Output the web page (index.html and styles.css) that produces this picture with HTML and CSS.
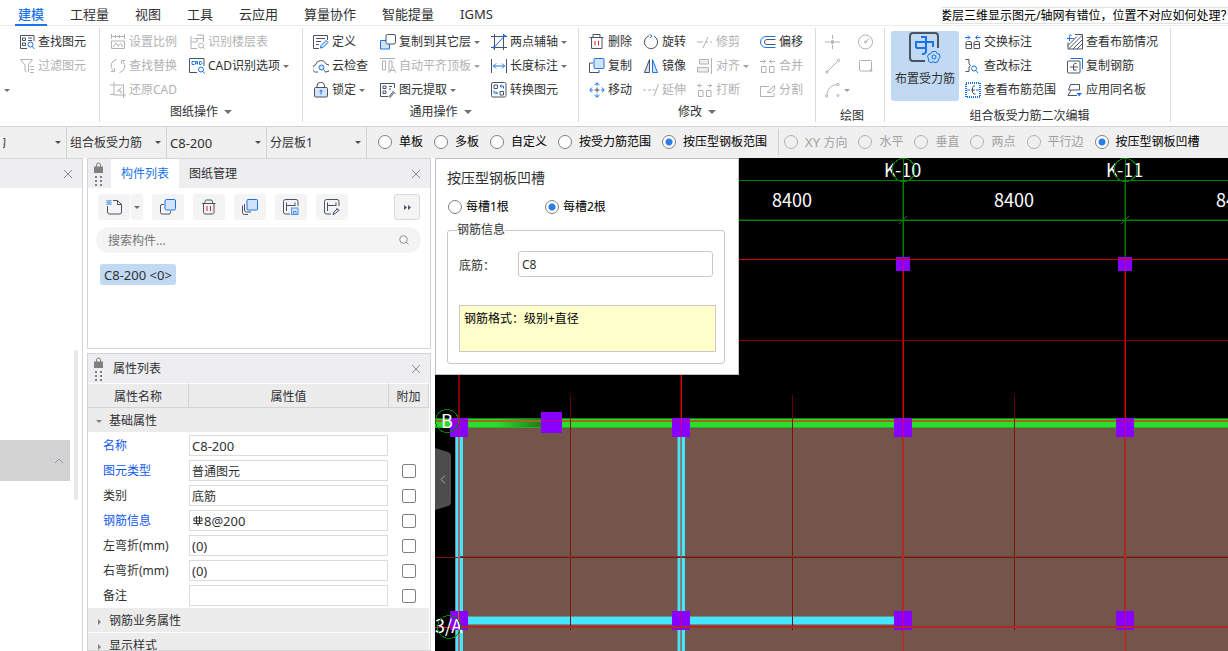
FILE: index.html
```html
<!DOCTYPE html>
<html lang="zh-CN">
<head>
<meta charset="utf-8">
<title>建模</title>
<link rel="stylesheet" href="styles.css">
</head>
<body>
<header class="menubar">
  <nav class="tabs">
    <a class="tab active" href="#">建模</a><a class="tab" href="#">工程量</a><a class="tab" href="#">视图</a><a class="tab" href="#">工具</a><a class="tab" href="#">云应用</a><a class="tab" href="#">算量协作</a><a class="tab" href="#">智能提量</a><a class="tab" href="#">IGMS</a>
  </nav>
  <div class="ticker"><span>娄层三维显示图元/轴网有错位，位置不对应如何处理？</span></div>
</header>

<section class="ribbon">
  <div class="group g-select">
    <div class="tools">
      <button class="tool"><svg class="ic" viewBox="0 0 16 16"><path class="d" d="M15 7V1.500H1.500v13H8M3.500 4h3v2.500h-3zM3.500 9h3v2.500h-3zM9 4h4M9 6.500h4"/><path class="b" d="M14 10.500a2.500 2.500 0 1 1-5 0 2.500 2.500 0 0 1 5 0zM13.300 12.500l2 2.500"/></svg>查找图元</button>
      <button class="tool off"><svg class="ic" viewBox="0 0 16 16"><path d="M1.500 1.500h12L9.500 6.500v7.500M1.500 1.500l4.500 5.500v6l1.500 1M11 8.500h4M11 11.500h4M11 14.500h4"/></svg>过滤图元</button>
      <button class="tool stub" aria-label="更多"><svg class="ic" viewBox="0 0 16 16"><path class="b" d="M11 5h1M11 8.500h1M11 12h1"/></svg><i class="arr"></i></button>
    </div>
  </div>

  <div class="group g-drawing">
    <div class="tools">
      <button class="tool off"><svg class="ic" viewBox="0 0 16 16"><path d="M1.500 0v5M14.500 0v5M1.500 2.500h13M5.500 1v3M9.500 1v3M1.500 7v7.500h13V7zM3 13l3-4 2.500 3.500M8 12l2.500-2.500L13 13"/></svg>设置比例</button>
      <button class="tool off"><svg class="ic" viewBox="0 0 16 16"><path d="M2 2v6H8V4.500h6.500V8M2 14.500h6M2 8v6.500M8 1h6.500v4M5 4.500h3M14 13l2 2.500"/><circle cx="12" cy="11.500" r="2.500"/></svg>识别楼层表</button>
      <button class="tool off"><svg class="ic" viewBox="0 0 16 16"><path d="M6.500 1.500A6.500 6.500 0 0 0 3 12.500M1 13.500h3.500V10M9.500 14.500A6.500 6.500 0 0 0 13 3.500M15 2.500h-3.500V6"/></svg>查找替换</button>
      <button class="tool"><svg class="ic" viewBox="0 0 16 16"><path class="d" d="M15 8V.500H.500v14H8"/><path class="b" d="M5.500 3.500H3v3h2.500M6.500 6.500V3.500h2v3M6.500 5h2M10.500 3.500h1.500l1 1v1l-1 1h-1.500z"/><circle class="b" cx="12" cy="11.500" r="2.500"/><path class="b" d="M14 13.500l1.500 2"/></svg>CAD识别选项<i class="arr"></i></button>
      <button class="tool off"><svg class="ic" viewBox="0 0 16 16"><path d="M4 0v13h12M0 3h14M13.500 3v13M0 12.500h4M11 6L8 9h3v2.500M11.500 5.500L7 9.500"/></svg>还原CAD</button>
    </div>
    <button class="group-title">图纸操作<i class="arr big"></i></button>
  </div>

  <div class="group g-common">
    <div class="tools">
      <button class="tool"><svg class="ic" viewBox="0 0 16 16"><path class="d" d="M14.500 6V1.500H.500v13H6M3 4.500h9M3 7.500h5M3 10.500h3"/><path class="bf" d="M8 11.500l5-5 2 2-5 5-2.500.500z"/></svg>定义</button>
      <button class="tool"><svg class="ic" viewBox="0 0 16 16"><path class="bf" d="M.500 6.500h9v8.500h-9z"/><rect class="dw" x="6" y=".5" width="9.500" height="9.500" rx="1.500"/></svg>复制到其它层<i class="arr"></i></button>
      <button class="tool"><svg class="ic" viewBox="0 0 16 16"><path class="d" d="M3.500 0v16M12.500 0v16M0 2.500h16M0 13.500h16"/><path class="b" d="M2.500 14L14 1.500"/><circle class="bs" cx="3" cy="13.500" r="1.300"/><circle class="bs" cx="13.500" cy="2" r="1.300"/></svg>两点辅轴<i class="arr"></i></button>
      <button class="tool"><svg class="ic" viewBox="0 0 16 16"><path class="d" d="M5 14H4A3.500 3.500 0 0 1 2.500 7 5.500 5.500 0 0 1 13 6a4 4 0 0 1 0 8h-1"/><circle class="bf" cx="8.500" cy="9.500" r="2.500"/><path class="b" d="M10.500 11.500l2 2.500"/></svg>云检查</button>
      <button class="tool off"><svg class="ic" viewBox="0 0 16 16"><path d="M0 .500h15M2.500 3v9h3V3zM9 14V3h3v5M9 15l3.500-7L16 15M10.500 12.500h4"/></svg>自动平齐顶板<i class="arr"></i></button>
      <button class="tool"><svg class="ic" viewBox="0 0 16 16"><path class="d" d="M.500 1v14M15.500 1v14"/><path class="b" d="M2 8h12M5 5.500L2.500 8 5 10.500M11 5.500L13.500 8 11 10.500"/></svg>长度标注<i class="arr"></i></button>
      <button class="tool"><svg class="ic" viewBox="0 0 16 16"><path class="d" d="M4 5.500V4a3.500 3.500 0 0 1 7.500 0v1.500"/><rect class="dl" x="1.500" y="5.500" width="13" height="9.500" rx="1"/><path class="b" d="M8 12.500V9M6.500 9.500L8 8l1.500 1.500"/></svg>锁定<i class="arr"></i></button>
      <button class="tool"><svg class="ic" viewBox="0 0 16 16"><path class="d" d="M14.500 6V1.500H.500v13H8M3 4h3v2.500H3zM3 9h3v2.500H3zM9 4.500h3M9 7h2"/><path class="dl" d="M9 14.500l3.500-4 1 1-3.500 4zM12.500 9l3 3"/></svg>图元提取<i class="arr"></i></button>
      <button class="tool"><svg class="ic" viewBox="0 0 16 16"><rect class="d" x=".5" y=".5" width="14.500" height="14.500" rx="1.500"/><path class="d" d="M3 3h3.500v3.500H3zM9 9.500h3.500V13H9z"/><path class="b" d="M12.500 6.500V4H9M10.500 2.500L9 4l1.500 1.500M3 8.500V11h3.500M5 9.500L6.500 11 5 12.500"/></svg>转换图元</button>
    </div>
    <button class="group-title">通用操作<i class="arr big"></i></button>
  </div>

  <div class="group g-modify">
    <div class="tools">
      <button class="tool"><svg class="ic" viewBox="0 0 16 16"><path class="d" d="M.500 3.500h14M4 3.500v-3h7v3M2.500 3.500v11h10.500v-11"/><path class="r" d="M6 7v4.500M9.500 7v4.500"/></svg>删除</button>
      <button class="tool"><svg class="ic" viewBox="0 0 16 16"><path class="d" d="M6 1.800A6.600 6.600 0 1 0 11 2.200"/><path class="b" d="M6.500.500L9 2 7 4"/></svg>旋转</button>
      <button class="tool off"><svg class="ic" viewBox="0 0 16 16"><path d="M0 8h6M11 3L6 14M9 8h2M13 8h2"/></svg>修剪</button>
      <button class="tool"><svg class="ic" viewBox="0 0 16 16"><path class="b" d="M15.500 2.500H6a5.500 5.500 0 0 0 0 11h9.500"/><path class="d" d="M15.500 5.500H7a2.500 2.500 0 0 0 0 5h8.500"/></svg>偏移</button>
      <button class="tool"><svg class="ic" viewBox="0 0 16 16"><path class="d" d="M4 5H.500v9.500H10V12"/><rect class="bf" x="5" y=".5" width="10" height="10" rx="1"/></svg>复制</button>
      <button class="tool"><svg class="ic" viewBox="0 0 16 16"><path class="dl" d="M6.500 1.500v13h-5z"/><path class="bf" d="M9.500 1.500v13h5z"/></svg>镜像</button>
      <button class="tool off"><svg class="ic" viewBox="0 0 16 16"><path class="gf" d="M2.500 1.500h9v4.500h-9zM.500 9.500h11V14H.500zM14.500 0v16"/></svg>对齐<i class="arr"></i></button>
      <button class="tool off"><svg class="ic" viewBox="0 0 16 16"><path d="M1.500 8.500h4.500v6H1.500zM9.500 8.500H14v6H9.500zM0 3.500h5M3.500 1.500l2 2-2 2M15 3.500h-5M11.500 1.500l-2 2 2 2"/></svg>合并</button>
      <button class="tool"><svg class="ic" viewBox="0 0 16 16"><path class="b" d="M5.500 3L8 .800 10.500 3M5.500 13L8 15.200 10.500 13M3 5.500L.800 8 3 10.500M13 5.500L15.200 8 13 10.500M1 8h3M12 8h3M8 1v3M8 12v3"/><path class="d" d="M5.500 8h5M8 5.500v5"/></svg>移动</button>
      <button class="tool off"><svg class="ic" viewBox="0 0 16 16"><path d="M0 8h3M5 8h3M9.500 8h3M15.500 2L11 14"/></svg>延伸</button>
      <button class="tool off"><svg class="ic" viewBox="0 0 16 16"><path d="M1.500 8.500h4.500v6H1.500zM9.500 8.500H14v6H9.500zM.500 3.500H5M3 1.500l-2 2 2 2M15 3.500h-4.500M12.500 1.500l2 2-2 2"/></svg>打断</button>
      <button class="tool off"><svg class="ic" viewBox="0 0 16 16"><path d="M9 4.500H.500v10H14V11M7 10.500l7.500-7v4L11 10.500z"/></svg>分割</button>
    </div>
    <button class="group-title">修改<i class="arr big"></i></button>
  </div>

  <div class="group g-draw">
    <div class="tools">
      <button class="tool off" aria-label="点"><svg class="ic" viewBox="0 0 16 16"><path d="M0 8h5M10 8h5M7.500 1v4M7.500 11v4"/><circle cx="7.500" cy="8" r="1.500" fill="currentColor"/></svg></button>
      <button class="tool off" aria-label="圆"><svg class="ic" viewBox="0 0 16 16"><circle cx="7.500" cy="8" r="7"/><path d="M7.500 8l4-3.500"/><circle cx="7.500" cy="8" r="1"/></svg></button>
      <button class="tool off" aria-label="直线"><svg class="ic" viewBox="0 0 16 16"><path d="M2.500 13.500l10-10"/><circle cx="2" cy="14" r="1.200"/><circle cx="13.500" cy="2.500" r="1.200"/></svg></button>
      <button class="tool off" aria-label="矩形"><svg class="ic" viewBox="0 0 16 16"><rect x="1.500" y="2.500" width="12" height="10.500" rx="1"/><circle cx="13" cy="12.500" r="1"/></svg></button>
      <button class="tool off" aria-label="圆弧"><svg class="ic" viewBox="0 0 16 16"><path d="M2 13C2 7 6 3 12 2.500"/><circle cx="1.500" cy="14" r="1.200"/><circle cx="13" cy="2.500" r="1.200"/><circle cx="13" cy="13.500" r="1"/></svg><i class="arr"></i></button>
    </div>
    <div class="group-title low">绘图</div>
  </div>

  <div class="group g-rebar">
    <div class="rebar-row">
      <button class="big-tool"><svg viewBox="0 0 32 32"><path class="d2" d="M29 16V4q0-3-3-3H4Q1 1 1 4v22q0 3 3 3h12"/><path class="b2" d="M12 5h5v14q0 3-4 3M7 16v-6h17v5M7 16h10"/><circle class="b1" cx="25" cy="25" r="2"/><path class="b1" d="M23 19.500h4l1 2.200 2.500.500.500 3-1.500 2-.500 2.500-3 1-2-1-2 1-2.500-1.500v-2.500l-1-2 1-2.500 2.500-.500z"/></svg>布置受力筋</button>
      <div class="tools">
        <button class="tool"><svg class="ic" viewBox="0 0 16 16"><path class="d" d="M1 10.500h5.500M9 10.500h5.500M1 14.500V9q0-1.500 1.500-1.500H5q1.500 0 1.500 1.500v5.500zM9 14.500V9q0-1.500 1.500-1.500H13q1.500 0 1.500 1.500v5.500z"/><path class="b" d="M0 3.500h4.500M3 1.500l2 2-2 2M15.500 3.500H11M12.500 1.500l-2 2 2 2"/></svg>交换标注</button>
        <button class="tool"><svg class="ic" viewBox="0 0 16 16"><path class="b" d="M0 4.500h7M4.500 1.500q-2-2-2 1v4.500"/><path class="d" d="M8 .500h7.500v14.500H1V8.500M2 14.500L15 1.500M6 15l9-9M10 15l5-5M1 11.500l9-9"/></svg>查看布筋情况</button>
        <button class="tool"><svg class="ic" viewBox="0 0 16 16"><path class="d" d="M.500 1.500H4V6l1.500 1.500L4 9v4.500H.500"/><circle class="b" cx="9" cy="10.500" r="2.500"/><path class="b" d="M11 12.500l2 2.500"/></svg>查改标注</button>
        <button class="tool"><svg class="ic" viewBox="0 0 16 16"><path class="b" d="M3.500.500h12V11"/><rect class="d" x=".5" y="3" width="12.500" height="12" rx="1"/><path class="d" d="M3 9h8M9.500 5.500H7.500L6.500 7v5h3"/></svg>复制钢筋</button>
        <button class="tool"><svg class="ic" viewBox="0 0 16 16"><rect class="dash" x="1" y="1" width="14" height="14"/><path class="b" d="M2 8h3M11 8h3"/><path class="d" d="M10 4H8.500L7.500 5.500v5L9 12h1.500M6 8h4"/></svg>查看布筋范围</button>
        <button class="tool"><svg class="ic" viewBox="0 0 16 16"><path class="d" d="M3.500 2.500h9V8h-11zM4 8L1 13.500h9"/><path class="bs" d="M9.500 11h5.500l-2.800 3.500z"/></svg>应用同名板</button>
      </div>
    </div>
    <div class="group-title low">组合板受力筋二次编辑</div>
  </div>
</section>

<form class="options">
  <div class="combo first"><select aria-label="专业"><option>构</option></select></div>
  <div class="combo"><select aria-label="构件类型"><option>组合板受力筋</option></select></div>
  <div class="combo"><select class="latin" aria-label="构件"><option>C8-200</option></select></div>
  <div class="combo"><select aria-label="分层板"><option>分层板1</option></select></div>
  <div class="radios">
    <label><input type="radio" name="range">单板</label>
    <label><input type="radio" name="range">多板</label>
    <label><input type="radio" name="range">自定义</label>
    <label><input type="radio" name="range">按受力筋范围</label>
    <label><input type="radio" name="range" checked>按压型钢板范围</label>
  </div>
  <div class="radios second">
    <label class="off"><input type="radio" name="dir"><span><span class="latin">XY </span>方向</span></label>
    <label class="off"><input type="radio" name="dir">水平</label>
    <label class="off"><input type="radio" name="dir">垂直</label>
    <label class="off"><input type="radio" name="dir">两点</label>
    <label class="off"><input type="radio" name="dir">平行边</label>
    <label><input type="radio" name="dir" checked>按压型钢板凹槽</label>
  </div>
</form>

<main class="work">
  <aside class="nav-panel">
    <div class="panel-head"><button class="close" aria-label="关闭"><svg viewBox="0 0 10 10"><path d="M1 1l8 8M9 1l-8 8"/></svg></button></div>
    <div class="nav-body">
      <div class="nav-list"><button class="nav-group" aria-label="收起"><svg viewBox="0 0 10 6"><path d="M1 5l4-4 4 4"/></svg></button></div>
      <div class="scroll-thumb"></div>
    </div>
  </aside>

  <div class="docks">
    <section class="dock list-dock">
      <div class="panel-head">
        <svg class="grip" viewBox="0 0 9 24"><path class="lk" d="M2.500 5V3a2 2 0 0 1 4 0v2"/><path class="gs" d="M0 4.500h9V11H0zM1 14h2v2H1zM6 14h2v2H6zM1 18h2v2H1zM6 18h2v2H6zM1 22h2v2H1zM6 22h2v2H6z"/></svg>
        <a class="ptab active" href="#">构件列表</a><a class="ptab" href="#">图纸管理</a>
        <button class="close" aria-label="关闭"><svg viewBox="0 0 10 10"><path d="M1 1l8 8M9 1l-8 8"/></svg></button>
      </div>
      <div class="list-tools">
        <div class="split">
          <button class="lt" aria-label="新建"><svg class="ic" viewBox="0 0 16 16"><path class="d" d="M1.500 7v6q0 2 2 2h10q2 0 2-2V5.500l-4-4H7M11.500 1.500v4h4"/><path class="bs" d="M.500 1h1v1h-1zM2.500 1h1v1h-1zM4.500 1h1v1h-1zM1.500 2h1v1h-1zM3.500 2h1v1h-1zM.500 3h1v1h-1zM2.500 3h1v1h-1zM4.500 3h1v1h-1zM1.500 4h1v1h-1zM3.500 4h1v1h-1zM.500 5h1v1h-1zM2.500 5h1v1h-1zM4.500 5h1v1h-1z"/></svg></button>
          <button class="lt drop" aria-label="新建选项"><i class="arr"></i></button>
        </div>
        <button class="lt" aria-label="复制"><svg class="ic" viewBox="0 0 16 16"><path class="d" d="M4 5.500H2Q.500 5.500.500 7v6.500Q.500 15 2 15h7q1.500 0 1.500-1.500V12"/><rect class="bf" x="5" y=".5" width="10.500" height="10.500" rx="1.500"/></svg></button>
        <button class="lt" aria-label="删除"><svg class="ic" viewBox="0 0 16 16"><path class="d" d="M1 4.500h13.500M4 4V2.500Q4 1 5.500 1H10q1.500 0 1.500 1.500V4M2.500 4.500v9Q2.500 15 4 15h7.500q1.500 0 1.500-1.500v-9"/><path class="r" d="M6 7v5M9.500 7v5"/></svg></button>
        <button class="lt" aria-label="层间复制"><svg class="ic" viewBox="0 0 16 16"><path class="d" d="M.500 6.500v7q0 2 2 2H6M2.500 5v6q0 2 2 2H9"/><rect class="bf" x="5" y=".5" width="10.500" height="10.500" rx="1"/></svg></button>
        <button class="lt" aria-label="存档"><svg class="ic" viewBox="0 0 16 16"><path class="d" d="M15 7V2.500Q15 .500 13 .500H2.500Q.500.500.500 2.500v10.500q0 2 2 2H7M3.500 12V3.500M3.500 6.500H12M12 3.500V7"/><rect class="bl" x="8.500" y="9" width="6.500" height="6.500"/><path class="bl" d="M10.500 15v-2.500h2.500V15"/></svg></button>
        <button class="lt" aria-label="提取"><svg class="ic" viewBox="0 0 16 16"><path class="d" d="M15 7V2.500Q15 .500 13 .500H2.500Q.500.500.500 2.500v10.500q0 2 2 2H7M3.500 12V3.500M3.500 6.500H12M12 3.500V7"/><path class="dl" d="M9 15.500l1-2.500 3-3 1.500 1.500-3 3zM12.500 9l3 3"/></svg></button>
        <button class="lt more" aria-label="更多"><svg class="ic" viewBox="0 0 16 16"><path class="fwd" d="M5 6l3 2.500L5 11zM9 6l3 2.500L9 11z"/></svg></button>
      </div>
      <label class="search"><input type="search" placeholder="搜索构件..." aria-label="搜索构件"><svg viewBox="0 0 10 10"><circle cx="4.500" cy="4.500" r="3.800"/><path d="M7 7l2.500 2.500"/></svg></label>
      <button class="item">C8-200 &lt;0&gt;</button>
    </section>

    <section class="dock prop-dock">
      <div class="panel-head">
        <svg class="grip" viewBox="0 0 9 24"><path class="lk" d="M2.500 5V3a2 2 0 0 1 4 0v2"/><path class="gs" d="M0 4.500h9V11H0zM1 14h2v2H1zM6 14h2v2H6zM1 18h2v2H1zM6 18h2v2H6zM1 22h2v2H1zM6 22h2v2H6z"/></svg>
        <h2>属性列表</h2>
        <button class="close" aria-label="关闭"><svg viewBox="0 0 10 10"><path d="M1 1l8 8M9 1l-8 8"/></svg></button>
      </div>
      <table class="props">
        <colgroup><col class="c-name"><col class="c-value"><col></colgroup>
        <thead><tr><th>属性名称</th><th>属性值</th><th>附加</th></tr></thead>
        <tbody>
          <tr class="section"><td colspan="3"><i class="arr open"></i>基础属性</td></tr>
          <tr><td class="key"><label for="p1">名称</label></td><td><div class="field"><input class="latin" id="p1" value="C8-200"></div></td><td></td></tr>
          <tr><td class="key"><label for="p2">图元类型</label></td><td><div class="field"><input id="p2" value="普通图元"></div></td><td><input type="checkbox" aria-label="附加图元类型"></td></tr>
          <tr><td><label for="p3">类别</label></td><td><div class="field"><input id="p3" value="底筋"></div></td><td><input type="checkbox" aria-label="附加类别"></td></tr>
          <tr><td class="key"><label for="p4">钢筋信息</label></td><td><div class="field sym"><svg viewBox="0 0 10 12"><path d="M3.500 1v7.500M6.500 1v7.500M5 8v3M.500 8.500h9M1 3h8v3H1z"/></svg><input class="latin" id="p4" value="8@200"></div></td><td><input type="checkbox" aria-label="附加钢筋信息"></td></tr>
          <tr><td><label for="p5">左弯折(mm)</label></td><td><div class="field"><input class="latin" id="p5" value="(0)"></div></td><td><input type="checkbox" aria-label="附加左弯折"></td></tr>
          <tr><td><label for="p6">右弯折(mm)</label></td><td><div class="field"><input class="latin" id="p6" value="(0)"></div></td><td><input type="checkbox" aria-label="附加右弯折"></td></tr>
          <tr><td><label for="p7">备注</label></td><td><div class="field"><input id="p7"></div></td><td><input type="checkbox" aria-label="附加备注"></td></tr>
          <tr class="section"><td colspan="3"><i class="arr shut"></i>钢筋业务属性</td></tr>
          <tr class="section"><td colspan="3"><i class="arr shut"></i>显示样式</td></tr>
        </tbody>
      </table>
    </section>
  </div>

  <section class="canvas">
    <svg class="plan" viewBox="435 158 793 493" preserveAspectRatio="xMinYMin slice" shape-rendering="crispEdges">
      <defs>
        <linearGradient id="shade"><stop offset="0" stop-color="#2cdc2c"/><stop offset=".4" stop-color="#2cdc2c"/><stop offset="1" stop-color="#227a1c"/></linearGradient>
      </defs>
      <rect x="435" y="158" width="793" height="493" fill="#000"/>
      <rect x="460" y="427" width="768" height="224" fill="#735649"/>
      <g fill="#008000">
        <rect x="435" y="180" width="793" height="1"/><rect x="435" y="220" width="793" height="1"/>
        <rect x="903" y="158" width="1" height="102"/><rect x="1125" y="158" width="1" height="102"/>
      </g>
      <g fill="#003800">
        <rect x="435" y="219" width="793" height="1"/>
        <rect x="902" y="181" width="1" height="79"/><rect x="1124" y="181" width="1" height="79"/>
      </g>
      <g fill="none" stroke="#008000"><path d="M899 224l8-8M1121 224l8-8"/></g>
      <rect x="435" y="418" width="793" height="10" fill="#2cdc2c"/>
      <rect x="435" y="418" width="793" height="1" fill="#178017"/>
      <rect x="468" y="419" width="73" height="9" fill="url(#shade)"/>
      <rect x="435" y="420" width="793" height="2" fill="#9c6a18"/>
      <rect x="435" y="427" width="793" height="1" fill="#2cae24"/>
      <g fill="#42e6ff">
        <rect x="456" y="428" width="7" height="223"/><rect x="678" y="428" width="7" height="223"/>
        <rect x="463" y="617" width="431" height="7"/>
      </g>
      <g fill="#6f9093">
        <rect x="455" y="428" width="1" height="223"/><rect x="677" y="428" width="1" height="223"/>
        <rect x="463" y="616" width="431" height="1"/><rect x="463" y="624" width="431" height="1"/>
        <rect x="458" y="428" width="2" height="223"/><rect x="680" y="428" width="2" height="223"/>
      </g>
      <g fill="#8a00ff">
        <rect x="896" y="257" width="14" height="14"/><rect x="1118" y="257" width="14" height="14"/>
        <rect x="450" y="418" width="18" height="19"/><rect x="541" y="412" width="21" height="21"/><rect x="672" y="418" width="18" height="19"/><rect x="894" y="418" width="18" height="19"/><rect x="1116" y="418" width="18" height="19"/>
        <rect x="450" y="611" width="18" height="19"/><rect x="672" y="611" width="18" height="19"/><rect x="894" y="611" width="18" height="19"/><rect x="1116" y="611" width="18" height="19"/>
      </g>
      <g fill="#d80000">
        <rect x="435" y="259" width="793" height="1"/>
        <rect x="903" y="260" width="1" height="158"/><rect x="1125" y="260" width="1" height="158"/>
        <rect x="681" y="375" width="1" height="43"/>
      </g>
      <g fill="#680000">
        <rect x="902" y="271" width="1" height="147"/><rect x="1124" y="271" width="1" height="147"/>
        <rect x="680" y="375" width="1" height="43"/>
      </g>
      <rect x="458" y="375" width="2" height="43" fill="#860000"/>
      <g fill="#8c0000">
        <rect x="435" y="340" width="793" height="1"/>
        <rect x="570" y="395" width="1" height="23" fill="#600000"/><rect x="792" y="395" width="1" height="23" fill="#600000"/><rect x="1014" y="395" width="1" height="23" fill="#600000"/>
      </g>
      <g fill="#82100e">
        <rect x="570" y="418" width="1" height="212"/><rect x="792" y="418" width="1" height="212"/><rect x="1014" y="418" width="1" height="212"/>
        <rect x="435" y="557" width="793" height="1"/>
      </g>
      <rect x="460" y="556" width="768" height="1" fill="#70403a"/>
      <g fill="#e01418">
        <rect x="903" y="437" width="1" height="214"/><rect x="1125" y="437" width="1" height="214"/>
        <rect x="435" y="627" width="793" height="1"/>
      </g>
      <g fill="#803c34">
        <rect x="902" y="437" width="1" height="174"/><rect x="1124" y="437" width="1" height="174"/>
        <rect x="460" y="626" width="768" height="1"/>
      </g>
      <g fill="#a06a70"><rect x="458" y="437" width="2" height="214"/><rect x="681" y="437" width="1" height="214"/></g>
      <g fill="#c00080">
        <rect x="541" y="420" width="21" height="1"/><rect x="450" y="420" width="18" height="1"/><rect x="672" y="420" width="18" height="1"/><rect x="894" y="420" width="18" height="1"/><rect x="1116" y="420" width="18" height="1"/>
        <rect x="459" y="418" width="1" height="19"/><rect x="681" y="418" width="1" height="19"/><rect x="903" y="418" width="1" height="19"/><rect x="1125" y="418" width="1" height="19"/>
        <rect x="459" y="611" width="1" height="19"/><rect x="681" y="611" width="1" height="19"/><rect x="903" y="611" width="1" height="19"/><rect x="1125" y="611" width="1" height="19"/>
        <rect x="903" y="260" width="1" height="11"/><rect x="1125" y="260" width="1" height="11"/>
      </g>
      <g class="axis">
        <text x="884" y="177">K-10</text><text x="1106" y="177">K-11</text>
        <text x="772" y="207">8400</text><text x="994" y="207">8400</text><text x="1216" y="207">8400</text>
        <text x="441" y="428">B</text><text x="435" y="633">3/A</text>
      </g>
      <g fill="none" stroke="#008000"><circle cx="903.500" cy="170" r="11.500"/><circle cx="1125.500" cy="170" r="11.500"/><circle cx="447" cy="421" r="11.500"/><circle cx="449" cy="627" r="11.500"/><path d="M903.500 158v24M1125.500 158v24"/></g>
      <g shape-rendering="auto"><path fill="#4d4d4d" d="M435 448l13 4q3 1 3 4v46q0 3-3 4l-13 4z"/><path fill="none" stroke="#a8a8a8" d="M445 475.500l-4 4 4 4"/></g>
    </svg>

    <form class="dialog">
      <h3>按压型钢板凹槽</h3>
      <div class="slots">
        <label><input type="radio" name="slot">每槽1根</label>
        <label><input type="radio" name="slot" checked>每槽2根</label>
      </div>
      <fieldset>
        <legend>钢筋信息</legend>
        <div class="bar-row"><label for="bar">底筋：</label><input id="bar" value="C8"></div>
        <p class="note">钢筋格式：级别+直径</p>
      </fieldset>
    </form>
  </section>
</main>
</body>
</html>
```

FILE: styles.css
```css
* { box-sizing: border-box; }

body {
  margin: 0;
  height: 100vh;
  display: flex;
  flex-direction: column;
  overflow: hidden;
  background: #fff;
  color: #303133;
  font: 12px/16px "Noto Sans", "Noto Sans CJK SC", sans-serif;
}

button, input, select { font: inherit; color: inherit; }
button { border: 0; padding: 0; background: none; white-space: nowrap; }
a { color: inherit; text-decoration: none; }
h2, h3, p { margin: 0; font-weight: 400; }
.latin { font-size: 13px; }

/* icons */
.ic { width: 16px; height: 16px; flex: none; fill: none; stroke: currentColor; }
svg .d, svg .dw, svg .dl { fill: none; stroke: #4a5365; }
svg .dw { fill: #fff; }
svg .dl { fill: #d3e3fc; }
svg .b, svg .b1 { fill: none; stroke: #1a73e8; }
svg .bf { fill: #d3e3fc; stroke: #1a73e8; }
svg .bl { fill: #d3e3fc; stroke: #4c94ec; }
svg .bs { fill: #1a73e8; stroke: none; }
svg .fwd { fill: #4a5365; stroke: none; }
svg .r { stroke: #e02020; }
svg .gf { fill: #eee; }
svg .dash { stroke: #1a73e8; stroke-width: 2; stroke-dasharray: 1 1; }
svg .d2 { fill: none; stroke: #4a5365; stroke-width: 2; }
svg .b2 { fill: none; stroke: #1a73e8; stroke-width: 2; }

.arr {
  flex: none;
  width: 0;
  height: 0;
  border: 3px solid transparent;
  border-top-color: #707070;
  border-bottom: 0;
}
.arr.big { border-width: 4px 4px 0; }

/* menu */
.menubar {
  flex: none;
  height: 26px;
  display: flex;
  justify-content: space-between;
  border-bottom: 1px solid #ececec;
}
.tabs { display: flex; gap: 20px; padding-left: 15px; font-size: 13px; }
.tab { padding: 0 3px; line-height: 28px; height: 26px; white-space: nowrap; }
.tab.active { color: #1a73e8; font-weight: 500; border-bottom: 2px solid #1a73e8; }
.ticker {
  flex: 0 0 286px;
  height: 17px;
  margin-top: 7px;
  overflow: hidden;
  white-space: nowrap;
  text-indent: -3px;
  border: 1px solid #e4e4e4;
  border-right: 0;
  color: #000;
}

/* ribbon */
.ribbon { flex: none; display: flex; height: 100px; padding-top: 2px; }
.group {
  flex: none;
  height: 94px;
  display: flex;
  flex-direction: column;
  padding-top: 2px;
  border-right: 1px solid #dcdcdc;
}
.tools { display: grid; grid-auto-rows: 24px; align-items: center; }
.tool { display: flex; align-items: center; gap: 3px; height: 24px; }
.off { color: #b2b2b2; }
.off .arr { border-top-color: #a0a0a0; }
.group-title { display: flex; align-items: center; justify-content: center; gap: 6px; height: 24px; }
.group-title.low { padding: 6px 0 2px 4px; }
.g-select { width: 100px; padding-left: 19px; }
.g-select .stub { margin-left: -30px; }
.stub .ic { margin-left: -4px; }
.g-drawing { width: 203px; }
.g-drawing .tools { grid-template-columns: 79px 1fr; padding-left: 10px; }
.g-drawing .tool:nth-child(5) { grid-column: 1; }
.g-common { width: 276px; }
.g-common .tools { grid-template-columns: 67px 111px 1fr; padding-left: 10px; }
.g-modify { width: 237px; }
.g-modify .tools { grid-template-columns: 54px 54px 63px 1fr; padding-left: 10px; }
.g-draw { width: 69px; }
.g-draw .tools { grid-template-columns: 33px 1fr; padding-left: 9px; }
.g-rebar { width: 286px; }
.rebar-row { display: flex; gap: 6px; padding-left: 6px; }
.rebar-row .tools { grid-template-columns: 102px 1fr; flex: 1; }
.big-tool {
  width: 68px;
  height: 70px;
  margin-top: 1px;
  display: flex;
  flex-direction: column;
  align-items: center;
  gap: 7px;
  padding-top: 1px;
  border-radius: 3px;
  background: #c1d9f2;
}
.big-tool svg { width: 32px; height: 32px; }

/* option bar */
.options {
  flex: none;
  height: 32px;
  display: flex;
  background: #f0f0f0;
  border-top: 1px solid #d4d4d4;
}
.combo { position: relative; flex: 0 0 100px; border-right: 1px solid #d4d4d4; }
.combo.first { flex-basis: 67px; overflow: hidden; }
.combo.first select { text-indent: -9px; }
.combo select {
  width: 100%;
  height: 31px;
  padding: 0 0 0 3px;
  border: 0;
  background: none;
  appearance: none;
}
.combo::after {
  content: "";
  position: absolute;
  right: 5px;
  top: 14px;
  border: 3px solid transparent;
  border-top-color: #505050;
  border-bottom: 0;
}
.radios { display: flex; align-items: center; gap: 11px; padding: 0 11px; height: 29px; color: #000; white-space: nowrap; }
.radios.second { padding-left: 5px; border-left: 1px solid #d0d0d0; height: 26px; margin-top: 2px; }
.radios label { display: flex; align-items: center; gap: 7px; }
.radios .off { color: #a0a0a0; }

input[type="radio"] {
  appearance: none;
  flex: none;
  width: 14px;
  height: 14px;
  margin: 0;
  border: 1px solid #808080;
  border-radius: 50%;
  background: #fff;
}
input[type="radio"]:checked { background: radial-gradient(circle, #2a7ee6 3px, #fff 4px); }
.off input[type="radio"] { border-color: #b0b0b0; background: #f0f0f0; }

/* work area */
.work {
  flex: 1;
  min-height: 0;
  display: grid;
  grid-template-columns: 83px 344px 1fr;
  grid-template-rows: 100%;
  gap: 4px;
}
.panel-head { display: flex; align-items: center; height: 29px; flex: none; background: #eeeef0; }
.close { margin-left: auto; width: 10px; height: 10px; display: flex; }
.close svg { width: 10px; height: 10px; stroke: #8c8c8c; }
.nav-panel {
  display: flex;
  flex-direction: column;
  border-top: 1px solid #d4d4d4;
  border-right: 1px solid #d4d4d4;
}
.nav-panel .close { margin-right: 9px; }
.nav-body { flex: 1; display: flex; gap: 4px; }
.nav-list { flex: 0 0 70px; padding-top: 252px; }
.nav-group {
  width: 100%;
  height: 41px;
  display: flex;
  align-items: center;
  justify-content: flex-end;
  padding-right: 6px;
  background: #d2d2d2;
}
.nav-group svg { width: 10px; height: 6px; fill: none; stroke: #8c94a8; }
.scroll-thumb { width: 4px; height: 150px; margin-top: 162px; border-radius: 2px; background: #e8e8e8; }

.docks { display: flex; flex-direction: column; gap: 4px; min-height: 0; }
.dock { border: 1px solid #d4d4d4; }
.list-dock { flex: 0 0 191px; }
.prop-dock { flex: 1; min-height: 0; overflow: hidden; }
.dock .close { margin-right: 9px; }
.grip { width: 9px; height: 24px; margin: 0 8px 0 6px; }
.lk { fill: none; stroke: #808080; }
.gs { fill: #808080; }
.ptab { padding: 0 10px; line-height: 29px; }
.ptab.active { background: #fff; color: #1a73e8; }
.prop-dock h2 { padding-left: 2px; font-size: 12px; line-height: 16px; }

.list-tools { display: flex; gap: 9px; padding: 6px 10px; }
.split { display: flex; gap: 1px; }
.lt {
  width: 32px;
  height: 26px;
  display: flex;
  align-items: center;
  justify-content: center;
  border-radius: 3px;
  background: #f4f4f4;
}
.lt.drop { width: 12px; }
.lt.more { width: 26px; margin-left: auto; border: 1px solid #d8d8d8; }
.search {
  display: flex;
  align-items: center;
  height: 26px;
  margin: 1px 9px 11px 8px;
  padding: 0 12px;
  border-radius: 13px;
  background: #f4f4f4;
}
.search input { flex: 1; min-width: 0; padding: 1px 0 0; border: 0; background: none; }
.search input::placeholder { color: #757575; }
.search svg { width: 10px; height: 10px; fill: none; stroke: #909090; }
.item { height: 21px; margin-left: 12px; padding: 0 4px; border-radius: 3px; background: #c1d9f2; font-size: 13px; line-height: 20px; }

.props { width: calc(100% - 1px); table-layout: fixed; border-collapse: separate; border-spacing: 0; }
.c-name { width: 101px; }
.c-value { width: 200px; }
.props th {
  height: 25px;
  padding: 2px 0 0;
  font-weight: 400;
  background: #ececec;
  border: 1px solid #d4d4d4;
  border-width: 0 1px 1px 0;
  border-top: 1px solid #fff;
}
.props td { height: 25px; padding: 0; }
.props td:first-child { padding-left: 15px; }
.props td:last-child { text-align: center; }
.props .key { color: #1258f0; }
.props .section td { padding: 2px 0 0 8px; text-align: left; background: #ececec; border-bottom: 1px solid #fff; }
.section .arr { display: inline-block; margin-right: 7px; vertical-align: middle; border-top-color: #808080; }
.section .shut { border: 3px solid transparent; border-left-color: #808080; border-right: 0; margin: 0 8px 0 2px; }
.field { display: flex; align-items: center; height: 21px; width: 199px; padding-left: 2px; border: 1px solid #dcdcdc; }
.field input { flex: 1; min-width: 0; height: 19px; padding: 0; border: 0; background: none; line-height: 18px; }
.field svg { width: 10px; height: 12px; margin: 0 1px; fill: none; stroke: #303133; }
input[type="checkbox"] {
  appearance: none;
  display: block;
  width: 14px;
  height: 14px;
  margin: 0 auto;
  border: 1px solid #808080;
  border-radius: 2px;
}

/* drawing */
.canvas { position: relative; background: #000; overflow: hidden; }
.plan { display: block; width: 100%; height: 100%; }
.axis { fill: #fff; font: 18px "Noto Sans CJK SC", sans-serif; }
.dialog {
  position: absolute;
  left: 0;
  top: 0;
  width: 304px;
  padding: 10px 13px 10px 11px;
  border: 1px solid #c0c0c0;
  background: #fff;
}
.dialog h3 { font-size: 14px; line-height: 18px; }
.slots { display: flex; gap: 36px; padding: 12px 0 7px 1px; color: #000; }
.slots label { display: flex; align-items: center; gap: 4px; line-height: 16px; }
.dialog fieldset { margin: 0; padding: 13px 8px 11px 11px; border: 1px solid #c8c8c8; border-radius: 3px; }
.dialog legend { margin-left: -2px; padding: 0; line-height: 16px; }
.bar-row { display: flex; align-items: center; margin-right: 3px; }
.bar-row label { flex: 0 0 59px; padding-top: 2px; font-family: "Noto Sans CJK TC", sans-serif; }
.bar-row input { flex: 1; min-width: 0; height: 26px; padding: 0 3px; border: 1px solid #c8c8c8; border-radius: 3px; }
.note { height: 47px; margin-top: 28px; padding: 5px 4px; border: 1px solid #c8c8c8; background: #ffffcc; color: #000; }
```
